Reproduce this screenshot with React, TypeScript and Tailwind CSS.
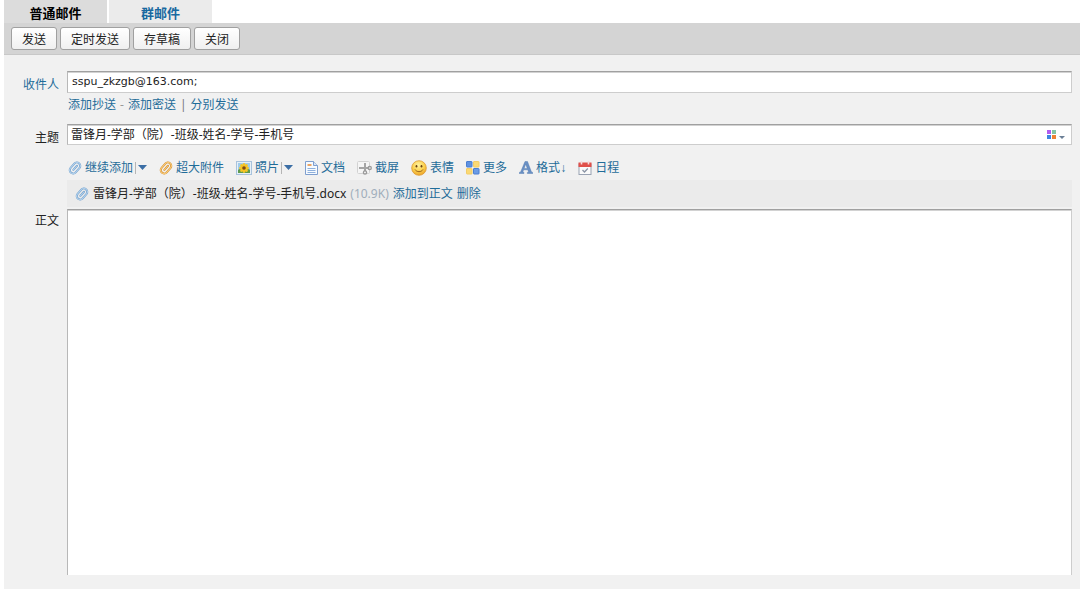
import { useState } from "react";
import type { ReactNode } from "react";

const PETALS = [0, 45, 90, 135, 180, 225, 270, 315];

function ClipIcon({ tone }: { tone: "blue" | "orange" }) {
  const dark = tone === "blue" ? "#6d9cc9" : "#d08a2c";
  const mid = tone === "blue" ? "#b5d3ee" : "#fbce7c";
  return (
    <svg width="14" height="14" viewBox="0 0 14 14" fill="none" strokeLinecap="round" aria-hidden="true">
      <g transform="rotate(42 7 7)">
        <rect x="3.600" y="0.800" width="6.800" height="12.400" rx="3.400" stroke={dark} strokeWidth="2" />
        <rect x="3.600" y="0.800" width="6.800" height="12.400" rx="3.400" stroke={mid} strokeWidth="1" />
        <path d="M7 4v5.500" stroke={dark} strokeWidth="2" />
        <path d="M7 4v5.500" stroke={mid} strokeWidth="1" />
      </g>
    </svg>
  );
}

function PhotoIcon() {
  return (
    <svg width="16" height="14" viewBox="0 0 16 14" aria-hidden="true">
      <rect x="0.500" y="0.500" width="15" height="13" fill="#e6f0f8" stroke="#a9c3dd" />
      <rect x="2" y="2" width="12" height="10" fill="#9fcbea" />
      <path d="M2 9c2-2 4 0 6 0s4-2 6 0v3H2z" fill="#5f9a4e" />
      {PETALS.map((a) => (
        <ellipse key={a} cx="8" cy="4.200" rx="1.500" ry="2.200" fill="#f7c524" transform={`rotate(${a} 8 7)`} />
      ))}
      <circle cx="8" cy="7" r="1.800" fill="#7a4a17" />
    </svg>
  );
}

function DocIcon() {
  return (
    <svg width="13" height="14" viewBox="0 0 13 14" fill="none" aria-hidden="true">
      <path d="M.5.5h8l4 4v9H.5z" fill="#f7fbff" stroke="#7f9fcf" />
      <path d="M8.500.5v4h4" fill="#d7e4f5" stroke="#7f9fcf" />
      <path d="M2.500 4h4" stroke="#eba564" strokeWidth="2" />
      <path d="M2.500 7.500h8M2.500 9.500h8M2.500 11.500h8" stroke="#8fb0dc" />
    </svg>
  );
}

function CaptureIcon() {
  return (
    <svg width="15" height="14" viewBox="0 0 15 14" fill="none" aria-hidden="true">
      <rect x="0.500" y="0.500" width="12" height="12" rx="1" fill="#f5f5f5" stroke="#d2d2d2" />
      <path d="M8 2v8M2 7h10" stroke="#a5a5a5" strokeWidth="2" />
      <circle cx="8" cy="11.500" r="1.600" stroke="#999" strokeWidth="1.300" />
      <circle cx="12.700" cy="7" r="1.600" stroke="#999" strokeWidth="1.300" />
    </svg>
  );
}

function SmileIcon() {
  return (
    <svg width="16" height="16" viewBox="0 0 16 16" fill="none" aria-hidden="true">
      <defs>
        <radialGradient id="face" cx="0.45" cy="0.3" r="0.7">
          <stop offset="0" stopColor="#fff2a0" />
          <stop offset="0.6" stopColor="#fbd04b" />
          <stop offset="1" stopColor="#eda42c" />
        </radialGradient>
      </defs>
      <circle cx="8" cy="8" r="7.300" fill="url(#face)" stroke="#dd9a33" strokeWidth="0.800" />
      <ellipse cx="5.500" cy="6.200" rx="0.900" ry="1.300" fill="#6a4010" />
      <ellipse cx="10.500" cy="6.200" rx="0.900" ry="1.300" fill="#6a4010" />
      <path d="M4.200 9.800c1.500 2.600 6.100 2.600 7.600 0" stroke="#9a6220" strokeWidth="1" strokeLinecap="round" />
    </svg>
  );
}

function MoreIcon() {
  return (
    <svg width="14" height="14" viewBox="0 0 14 14" aria-hidden="true">
      <rect x="0.500" y="0.500" width="5.500" height="5.500" rx="0.500" fill="#5f92e2" stroke="#4a7fd2" />
      <rect x="7.500" y="0.500" width="5.500" height="5.500" rx="0.500" fill="#fbd975" stroke="#f3cd66" />
      <rect x="0.500" y="7.500" width="5.500" height="5.500" rx="0.500" fill="#fbd975" stroke="#f3cd66" />
      <rect x="7.500" y="7.500" width="5.500" height="5.500" rx="0.500" fill="#6c9ce6" stroke="#4a7fd2" />
    </svg>
  );
}

function FormatIcon() {
  return (
    <svg width="14" height="13" viewBox="0 0 14 13" aria-hidden="true">
      <path
        fillRule="evenodd"
        d="M6 .5h2.500l4 10.500 1.300.4v1.100H8.300v-1.100l1.300-.4-.8-2.200H4.600L3.800 11l1.200.4v1.100H.2v-1.100l1.400-.4zM6.700 3.200 5.100 7.400h3.200z"
        fill="#6a90c4"
        stroke="#4a74ae"
        strokeWidth="0.400"
      />
    </svg>
  );
}

function CalendarIcon() {
  return (
    <svg width="14" height="14" viewBox="0 0 14 14" fill="none" aria-hidden="true">
      <rect x="1" y="3" width="12" height="10.500" fill="#fafafa" stroke="#9aa3b3" />
      <path d="M.5 1.500h13V6H.5z" fill="#e0504a" />
      <path d="M3.500 0v3.500M10.500 0v3.500" stroke="#f5dcdc" strokeWidth="1.600" />
      <path d="m4.500 9 2 2 3.300-3.500" stroke="#8b95a5" strokeWidth="1.300" />
    </svg>
  );
}

function Caret() {
  return (
    <svg width="9" height="5" viewBox="0 0 9 5" aria-hidden="true">
      <path d="M0 0h9L4.500 5z" fill="#3b6ea5" />
    </svg>
  );
}

function Tool({ icon, label, menu }: { icon: ReactNode; label: ReactNode; menu?: string }) {
  return (
    <div className="flex items-center gap-0.5">
      <button type="button" className="flex items-center gap-[3px] hover:underline">
        <span className="flex h-4 items-center">{icon}</span>
        <span>{label}</span>
      </button>
      {menu && (
        <button type="button" aria-label={menu} className="flex h-3 items-center border-l border-[#b5b5b5] pl-0.5">
          <Caret />
        </button>
      )}
    </div>
  );
}

const BUTTONS = ["发送", "定时发送", "存草稿", "关闭"];
const FIELD =
  "border border-[#cdcdcd] border-t-[#a0a0a0] border-l-[#b8b8b8] bg-white shadow-[inset_0_1px_0_#d2d2d2] outline-none";

export default function App() {
  const [to, setTo] = useState("sspu_zkzgb@163.com;");
  const [subject, setSubject] = useState("雷锋月-学部（院）-班级-姓名-学号-手机号");
  const [body, setBody] = useState("");

  return (
    <div className="flex min-h-screen flex-col bg-white pl-1 font-['Noto_Sans','Noto_Sans_CJK_SC',sans-serif] text-[12px] leading-4 text-[#222]">
      <nav className="flex gap-0.5 text-[13px] font-bold">
        <a href="#normal" className="flex h-[23px] w-[103px] items-center justify-center bg-[#dcdcdc] pt-0.5 text-black">普通邮件</a>
        <a href="#group" className="flex h-[23px] w-[103px] items-center justify-center bg-[#ebebeb] pt-0.5 text-[#1869a0]">群邮件</a>
      </nav>

      <div className="flex gap-[3px] border-b border-[#c8c8c8] bg-[#d4d4d4] px-[7px] py-1">
        {BUTTONS.map((b) => (
          <button
            key={b}
            type="button"
            className="flex h-[23px] items-center rounded-[3px] border border-[#a0a0a0] bg-linear-to-b from-white to-[#f0f0f0] px-2.5 pt-0.5 hover:to-[#e4e4e4]"
          >
            {b}
          </button>
        ))}
      </div>

      <form
        className="grid flex-1 grid-cols-[55px_minmax(0,1fr)] grid-rows-[auto_auto_1fr] gap-x-2 bg-[#f1f1f1] pt-4 pr-2 pb-3.5"
        onSubmit={(e) => e.preventDefault()}
      >
        <label htmlFor="to" className="pt-1.5 text-right text-[#1f6c99]">收件人</label>
        <div>
          <div className={`flex h-[22px] ${FIELD}`}>
            <input
              id="to"
              value={to}
              onChange={(e) => setTo(e.target.value)}
              className="min-w-0 flex-1 bg-transparent px-1 font-['DejaVu_Sans',sans-serif] text-[11px] outline-none"
            />
          </div>
          <div className="flex h-[31px] items-start gap-1 pt-1 pl-px text-[#1f6c99]">
            <a href="#cc" className="hover:underline">添加抄送</a>
            <span className="text-[#999]">-</span>
            <a href="#bcc" className="hover:underline">添加密送</a>
            <span className="text-[#777]">|</span>
            <a href="#separate" className="hover:underline">分别发送</a>
          </div>
        </div>

        <label htmlFor="subject" className="pt-1.5 text-right">主题</label>
        <div>
          <div className={`flex h-[21px] items-center pr-1.5 ${FIELD}`}>
            <input
              id="subject"
              value={subject}
              onChange={(e) => setSubject(e.target.value)}
              className="min-w-0 flex-1 bg-transparent px-[3px] outline-none"
            />
            <button type="button" aria-label="标题颜色" className="flex items-end gap-[3px]">
              <svg width="9" height="9" viewBox="0 0 9 9" aria-hidden="true">
                <path d="M0 0h4v4H0z" fill="#b15cf0" />
                <path d="M5 0h4v4H5z" fill="#84c5a5" />
                <path d="M0 5h4v4H0z" fill="#3d85e0" />
                <path d="M5 5h4v4H5z" fill="#ee8132" />
              </svg>
              <svg width="6" height="3" viewBox="0 0 6 3" aria-hidden="true">
                <path d="M0 0h6L3 3z" fill="#6b7f96" />
              </svg>
            </button>
          </div>
          <div className="flex h-[35px] items-center gap-3 pt-2.5 pl-px whitespace-nowrap text-[#1f6c99]">
            <Tool icon={<ClipIcon tone="blue" />} label="继续添加" menu="继续添加选项" />
            <Tool icon={<ClipIcon tone="orange" />} label="超大附件" />
            <Tool icon={<PhotoIcon />} label="照片" menu="照片选项" />
            <Tool icon={<DocIcon />} label="文档" />
            <Tool icon={<CaptureIcon />} label="截屏" />
            <Tool icon={<SmileIcon />} label="表情" />
            <Tool icon={<MoreIcon />} label="更多" />
            <Tool icon={<FormatIcon />} label={<>格式<span className="font-['Liberation_Sans',sans-serif]">↓</span></>} />
            <Tool icon={<CalendarIcon />} label="日程" />
          </div>
          <div className="mb-0.5 flex h-[27px] items-center gap-1 bg-[#ebebeb] pl-2 whitespace-nowrap">
            <ClipIcon tone="blue" />
            <span>雷锋月-学部（院）-班级-姓名-学号-手机号.docx</span>
            <span className="text-[#a0aebb]">(10.9K)</span>
            <button type="button" className="text-[#1f6c99] hover:underline">添加到正文</button>
            <button type="button" className="text-[#1f6c99] hover:underline">删除</button>
          </div>
        </div>

        <label htmlFor="body" className="pt-1 text-right">正文</label>
        <textarea
          id="body"
          value={body}
          onChange={(e) => setBody(e.target.value)}
          className={`min-h-40 w-full resize-none border-b-0 p-1 ${FIELD}`}
        />
      </form>
    </div>
  );
}
